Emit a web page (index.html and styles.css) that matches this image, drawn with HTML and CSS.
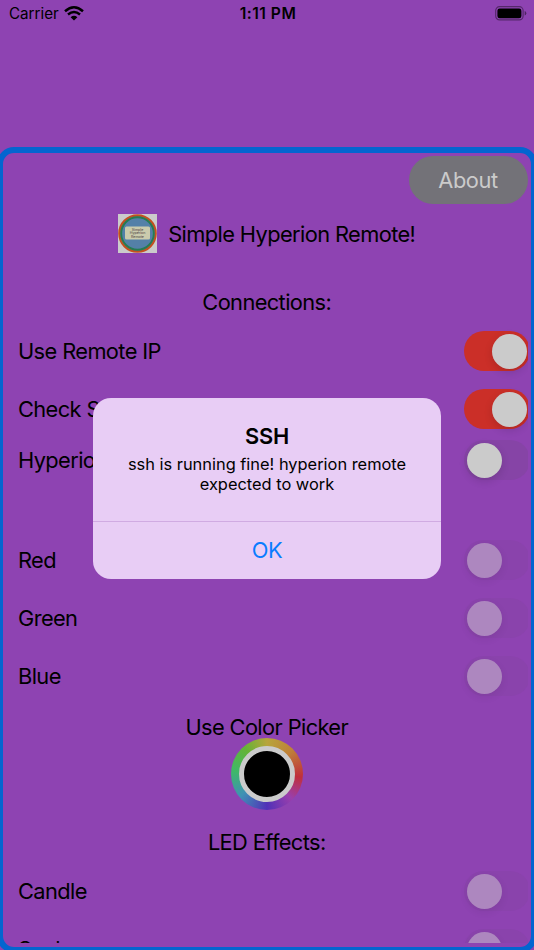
FILE: index.html
```html
<!DOCTYPE html>
<html lang="en">
  <head>
    <meta charset="utf-8">
    <title>Simple Hyperion Remote</title>
    <link rel="stylesheet" href="styles.css">
  </head>
  <body>
    <div class="status-bar">
      <div class="carrier">
        <span class="carrier-name">Carrier</span>
        <svg class="wifi" width="20" height="15" viewBox="0 0 20 15">
          <path d="M1 5.2 Q10 -2.6 19 5.2" fill="none" stroke="#000" stroke-width="2.5"/>
          <path d="M4 8.5 Q10 3.3 16 8.5" fill="none" stroke="#000" stroke-width="2.4"/>
          <path d="M10 14.5 L6.6 11.2 Q10 8.3 13.4 11.2 Z"/>
        </svg>
      </div>
      <div class="clock">1:11 PM</div>
      <svg class="battery" width="32" height="15" viewBox="0 0 32 15">
        <rect x=".7" y=".7" width="27.4" height="13.2" rx="3.8" fill="none" stroke="#000" stroke-opacity=".4" stroke-width="1.2"/>
        <rect x="2.4" y="2.4" width="24" height="9.8" rx="2.3"/>
        <path d="M29.7 5 Q31.3 5.6 31.3 7.3 Q31.3 9 29.7 9.6 Z" opacity=".45"/>
      </svg>
    </div>

    <div class="panel">
      <div class="content">
        <button class="about">About</button>
        <div class="brand">
          <svg class="logo" width="39" height="39" viewBox="0 0 39 39">
            <rect width="39" height="39" fill="#cbcbcb"/>
            <circle cx="19.5" cy="19.5" r="18.2" fill="#5480a8" stroke="#c4501f" stroke-width="2.2"/>
            <circle cx="19.5" cy="19.5" r="16.3" fill="none" stroke="#277b52" stroke-width="1.9"/>
            <rect x="7" y="12.5" width="25" height="13" rx="1.5" fill="#cbcbad"/>
            <g class="logo-text" text-anchor="middle">
              <text x="19.5" y="16.8">Simple</text>
              <text x="19.5" y="20.4">Hyperion</text>
              <text x="19.5" y="24">Remote</text>
            </g>
          </svg>
          <span>Simple Hyperion Remote!</span>
        </div>
        <div class="heading connections">Connections:</div>
        <div class="row"><span>Use Remote IP</span><span class="switch on"></span></div>
        <div class="row"><span>Check SSH</span><span class="switch on"></span></div>
        <div class="row hyperion"><span>Hyperion</span><span class="switch"></span></div>
        <div class="row"><span>Red</span><span class="switch disabled"></span></div>
        <div class="row"><span>Green</span><span class="switch disabled"></span></div>
        <div class="row"><span>Blue</span><span class="switch disabled"></span></div>
        <div class="heading picker-title">Use Color Picker</div>
        <div class="picker"><div class="picker-color"></div></div>
        <div class="heading effects">LED Effects:</div>
        <div class="row"><span>Candle</span><span class="switch disabled"></span></div>
        <div class="row"><span>Snake</span><span class="switch disabled"></span></div>
      </div>
    </div>

    <div class="alert">
      <div class="alert-body">
        <div class="alert-title">SSH</div>
        <div class="alert-message">ssh is running fine! hyperion remote<br>expected to work</div>
      </div>
      <button class="alert-ok">OK</button>
    </div>
  </body>
</html>
```
FILE: styles.css
```css
* {
    box-sizing: border-box;
}

body {
    margin: 0;
    height: 950px;
    overflow: hidden;
    position: relative;
    background-color: #8e43b2;
    color: #000;
    font-family: Inter, "Liberation Sans", sans-serif;
    font-size: 21.8px;
}

button {
    border: none;
    padding: 0;
    font-family: inherit;
}

/* status bar */
.status-bar {
    display: grid;
    grid-template-columns: 1fr auto 1fr;
    align-items: center;
    height: 147px;
    padding: 0 7px 120px 9px;
}
.carrier {
    display: flex;
    align-items: center;
    gap: 5px;
    font-size: 15.2px;
}
.clock {
    font-size: 15.6px;
    font-weight: 600;
    letter-spacing: .5px;
}
.battery {
    justify-self: end;
}

/* main panel */
.panel {
    height: 806px;
    margin: 0 -3px;
    padding: 3px 3.5px 4px 3px;
    border: 6px solid #0365d0;
    border-radius: 17px;
}
.content {
    height: 787px;
    overflow: hidden;
    display: flex;
    flex-direction: column;
    letter-spacing: -.6px;
}
.content > * {
    flex-shrink: 0;
}
.about {
    align-self: flex-end;
    width: 119px;
    height: 48px;
    border-radius: 24px;
    background-color: #737278;
    color: #cbcbcb;
    font-size: 21.8px;
    letter-spacing: -.4px;
}
.brand {
    display: flex;
    align-items: center;
    justify-content: center;
    gap: 11px;
    height: 39px;
    margin-top: 10px;
}
.logo-text {
    font-size: 3.6px;
    letter-spacing: 0;
    fill: #4a3d3d;
}
.heading {
    height: 28px;
    line-height: 28px;
    text-align: center;
}
.connections {
    margin: 35px 0 6px;
}
.row {
    display: flex;
    align-items: center;
    justify-content: space-between;
    height: 58px;
    padding-left: 12px;
}
.hyperion {
    height: 44px;
    margin-bottom: 49px;
}

.switch {
    width: 66px;
    height: 40px;
    margin-right: -2.5px;
    padding: 2.5px;
    border-radius: 20px;
    background-color: #8644a6;
    display: flex;
}
.switch::before {
    content: "";
    width: 35px;
    height: 35px;
    border-radius: 50%;
    background-color: #cbcbcb;
    box-shadow: 0 3px 8px rgba(0, 0, 0, .14);
}
.switch.on {
    justify-content: flex-end;
    background-color: #cb2f28;
}
.switch.on::before {
    margin-right: .5px;
}
.switch.disabled {
    background-color: #8a43ac;
}
.switch.disabled::before {
    background-color: #ad87bf;
    box-shadow: 0 3px 8px rgba(0, 0, 0, .07);
}

.picker-title {
    margin-top: 8px;
}
.picker {
    align-self: center;
    width: 72px;
    height: 72px;
    margin-top: -3px;
    padding: 8px;
    border-radius: 50%;
    background: conic-gradient(#b7a53b, #bf8238 45deg, #c02f3c 95deg, #9a3fac 135deg, #5131b8 180deg, #3f91b5 230deg, #3fb968 275deg, #65b336 320deg, #b7a53b);
}
.picker-color {
    height: 100%;
    border: 5px solid #cbcbcb;
    border-radius: 50%;
    background-color: #000;
}
.effects {
    margin: 18px 0 6px;
}

/* alert */
.alert {
    position: absolute;
    left: 93px;
    top: 397.5px;
    width: 348px;
    height: 181px;
    border-radius: 18px;
    background-color: #e8cdf5;
    overflow: hidden;
    text-align: center;
}
.alert-body {
    height: 124px;
    padding-top: 24px;
    border-bottom: 1px solid #d0abe2;
}
.alert-title {
    font-weight: 600;
    line-height: 28px;
    letter-spacing: -.2px;
}
.alert-message {
    margin-top: 4px;
    font-size: 16.4px;
    line-height: 20.6px;
}
.alert-ok {
    width: 100%;
    height: 56px;
    background: none;
    color: #087cff;
    font-size: 21.8px;
    letter-spacing: -.5px;
}
```
